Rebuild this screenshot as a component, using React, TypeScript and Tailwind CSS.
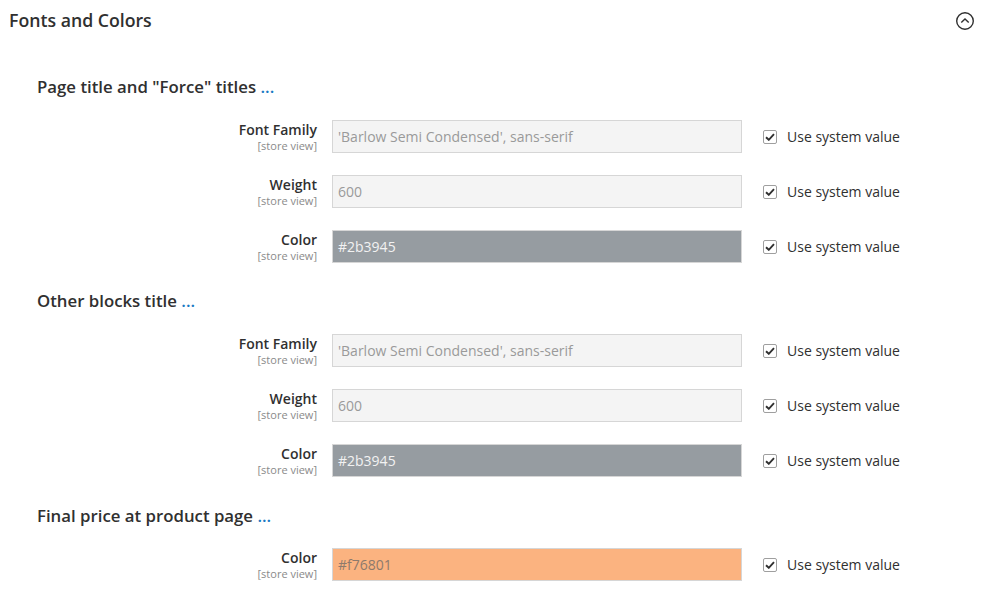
import React from "react";

type Row = { label: string; value: string; kind: "plain" | "gray" | "orange" };

const sections: { title: string; rows: Row[] }[] = [
  {
    title: 'Page title and "Force" titles',
    rows: [
      { label: "Font Family", value: "'Barlow Semi Condensed', sans-serif", kind: "plain" },
      { label: "Weight", value: "600", kind: "plain" },
      { label: "Color", value: "#2b3945", kind: "gray" },
    ],
  },
  {
    title: "Other blocks title",
    rows: [
      { label: "Font Family", value: "'Barlow Semi Condensed', sans-serif", kind: "plain" },
      { label: "Weight", value: "600", kind: "plain" },
      { label: "Color", value: "#2b3945", kind: "gray" },
    ],
  },
  {
    title: "Final price at product page",
    rows: [{ label: "Color", value: "#f76801", kind: "orange" }],
  },
];

function Check() {
  return (
    <span className="w-[14px] h-[14px] border border-[#9f9f9f] rounded-[2px] bg-white flex items-center justify-center">
      <svg width="10" height="8" viewBox="0 0 10 8">
        <path d="M1 4.2 L3.8 6.8 L9 1.2" fill="none" stroke="#303030" strokeWidth="1.9" />
      </svg>
    </span>
  );
}

function FieldRow({ row }: { row: Row }) {
  const inputCls =
    row.kind === "plain"
      ? "bg-[#f4f4f4] text-[#9a9a9a]"
      : row.kind === "gray"
      ? "bg-[#969ca1] text-[#f2f2f2]"
      : "bg-[#fbb380] text-[#8d7a6c]";
  return (
    <div className="flex h-[33px]">
      <div className="w-[317px] text-right pt-[1px]">
        <div className="text-[14px] leading-[18px] font-semibold text-[#303030]">{row.label}</div>
        <div className="text-[11px] leading-[13px] text-[#8a8a8a]">[store view]</div>
      </div>
      <div
        className={`ml-[15px] w-[410px] h-[33px] border border-[#d6d6d6] flex items-center px-[5px] text-[14px] ${inputCls}`}
      >
        {row.value}
      </div>
      <div className="ml-[21px] flex items-center gap-[10px]">
        <Check />
        <span className="text-[14px] text-[#303030]">Use system value</span>
      </div>
    </div>
  );
}

export default function App() {
  return (
    <div
      className="w-[988px] h-[611px] bg-white text-[#303030] overflow-hidden"
      style={{ fontFamily: '"Open Sans", sans-serif' }}
    >
      <div className="h-[40px] flex items-center justify-between pl-[9px] pr-[13px]">
        <span className="text-[17.7px] font-semibold text-[#303030]">Fonts and Colors</span>
        <svg width="20" height="20" viewBox="0 0 20 20" className="mt-[1px]">
          <circle cx="10" cy="10" r="8.3" fill="none" stroke="#303030" strokeWidth="1.4" />
          <path d="M6.3 11.6 L10 8 L13.7 11.6" fill="none" stroke="#303030" strokeWidth="1.4" />
        </svg>
      </div>
      <div className="pt-[37px]">
        {sections.map((s, i) => (
          <div key={i} className={i === 0 ? "" : i === 1 ? "mt-[28px]" : "mt-[29px]"}>
            <div className="pl-[37px] text-[16.8px] leading-[20px] font-semibold text-[#303030]">
              {s.title} <span className="text-[#1979c3]">...</span>
            </div>
            <div className={`flex flex-col gap-[22px] ${i === 2 ? "mt-[22px]" : "mt-[23px]"}`}>
              {s.rows.map((r, j) => (
                <FieldRow key={j} row={r} />
              ))}
            </div>
          </div>
        ))}
      </div>
    </div>
  );
}
